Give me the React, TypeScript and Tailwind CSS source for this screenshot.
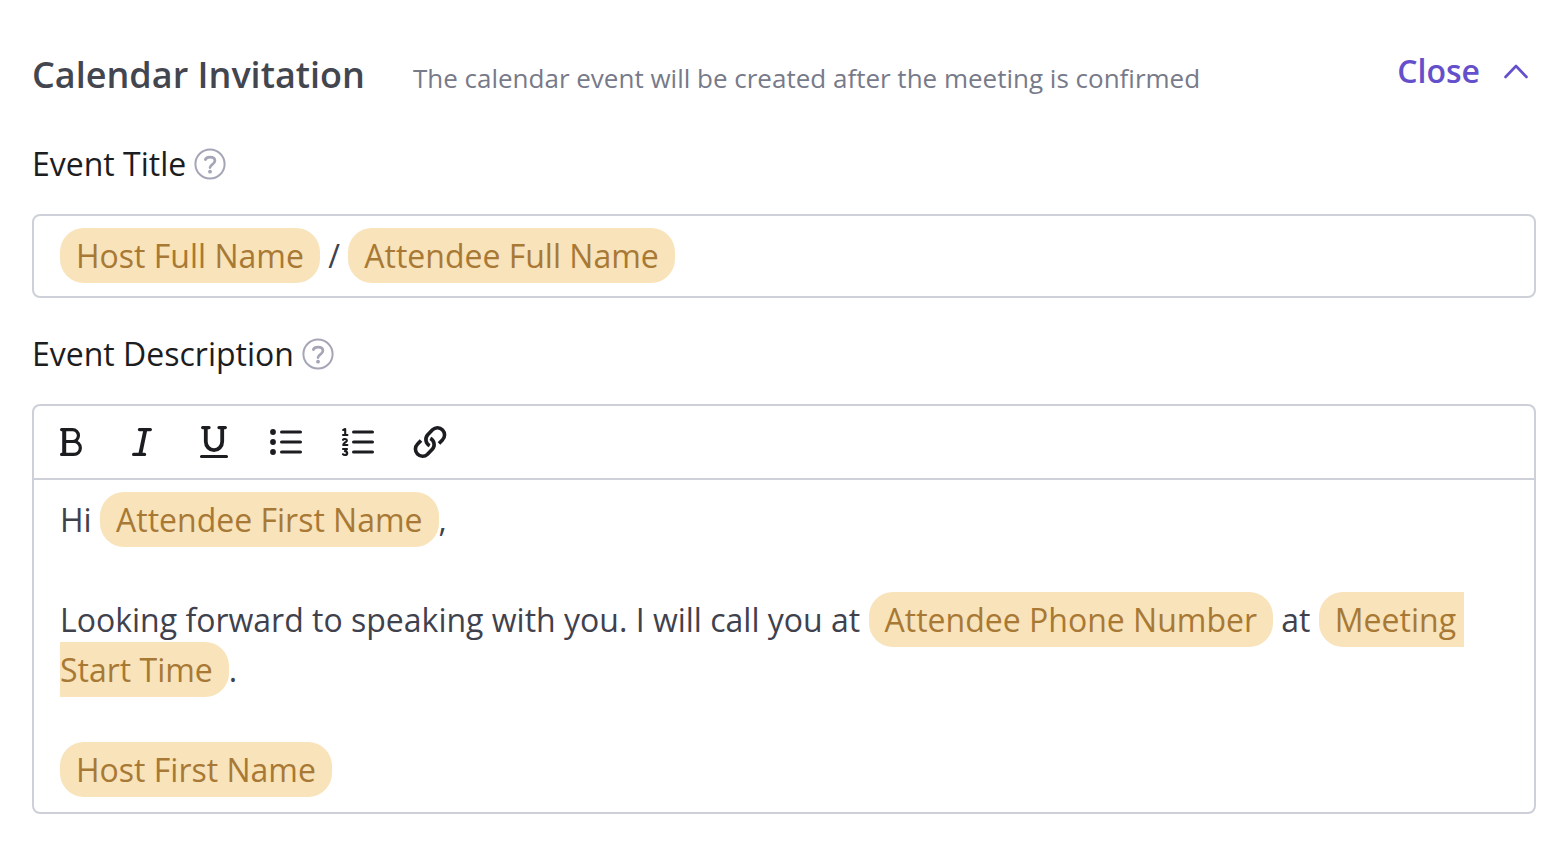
import type { ReactNode } from 'react'

const Tag = ({ children }: { children: ReactNode }) => (
  <span className="rounded-3xl bg-[#f8e3ba] px-4 py-1.5 text-[#a87935]">{children}</span>
)

const HelpButton = ({ label }: { label: string }) => (
  <button type="button" aria-label={label} className="text-[#a4a6b6]">
    <svg className="size-8" viewBox="0 0 32 32" fill="none" stroke="currentColor" strokeWidth="2">
      <circle cx="16" cy="16" r="14.6" />
      <path
        d="M11.3 11.6C12 10 13.7 9.2 16 9.2c2.9 0 4.9 1.400 4.9 3.6 0 3.600-4.900 3.300-4.900 6.800"
        strokeWidth="2.7"
        strokeLinecap="round"
      />
      <circle cx="16" cy="23.7" r="1.9" fill="currentColor" stroke="none" />
    </svg>
  </button>
)

const tools = [
  {
    name: 'Bold',
    icon: (
      <>
        <path
          d="M9.6 5.600H20.500a5.900 5.900 0 0 1 0 11.900H12.500M20.500 17.500h1.400a6.400 6.400 0 0 1 0 12.900H9.600"
          strokeWidth="3.2"
        />
        <path d="M12.200 6v24" strokeWidth="4" />
      </>
    ),
  },
  {
    name: 'Italic',
    icon: (
      <>
        <path d="M15.4 5.600h11M9.600 30.400h11" />
        <path d="M21.300 6l-5 24" strokeWidth="3.8" />
      </>
    ),
  },
  {
    name: 'Underline',
    icon: (
      <>
        <path d="M6.600 3.600h6.500M22.900 3.600h6.500M5.500 32.500h25" strokeWidth="3.1" />
        <path d="M9.800 4v13.500a8.200 8.600 0 0 0 16.400 0V4" strokeWidth="3.8" />
      </>
    ),
  },
  {
    name: 'Bulleted list',
    icon: (
      <>
        <path d="M13.500 8h19M13.500 18h19M13.500 28h19" strokeWidth="3" />
        <g fill="currentColor" stroke="none">
          <circle cx="5" cy="8" r="2.9" />
          <circle cx="5" cy="18" r="2.9" />
          <circle cx="5" cy="28" r="2.9" />
        </g>
      </>
    ),
  },
  {
    name: 'Numbered list',
    icon: (
      <>
        <path d="M13.500 8h19M13.500 18h19M13.500 28h19" strokeWidth="3" />
        <path
          d="M3.200 6L5.200 5v6M3 11h4.400M3 15.800c.6-1.200 3.900-1.200 3.900.6 0 1.700-3.600 2.500-3.700 4.600H7.400M3 25h4L4.900 27.300c3.200 0 3 3.700 0 3.700-.9 0-1.600-.3-2-.8"
          strokeWidth="2.1"
        />
      </>
    ),
  },
  {
    name: 'Link',
    icon: (
      <path
        d="M27 19.600l3.400-3.600A7 7 0 0 0 20.500 5.800L15.500 11a6.900 6.900 0 0 0 2.200 10.600M9 16.400L5.600 20a7 7 0 0 0 9.900 10.200L20.500 25a6.900 6.900 0 0 0-2.200-10.600"
        strokeWidth="3.6"
        strokeLinecap="butt"
      />
    ),
  },
]

const App = () => {
  return (
    <main className="bg-white pt-12 pr-7 pb-11 pl-8 font-['Open_Sans',sans-serif] text-[32px]">
      <header className="mb-[38px] flex items-start">
        <div className="flex items-baseline gap-12">
          <h1 className="text-4xl leading-[54px] font-semibold text-[#43464f]">Calendar Invitation</h1>
          <p className="text-[26px] text-[#777a89]">The calendar event will be created after the meeting is confirmed</p>
        </div>
        <button
          type="button"
          aria-expanded="true"
          className="ml-auto flex items-center gap-6 pr-2 leading-[46px] font-semibold text-[#6450ca]"
        >
          Close
          <svg
            className="h-4 w-6"
            viewBox="0 0 24 16"
            fill="none"
            stroke="currentColor"
            strokeWidth="2.6"
            strokeLinecap="round"
            strokeLinejoin="round"
          >
            <path d="M1.500 14L12 3l10.500 11" />
          </svg>
        </button>
      </header>

      <section className="mb-8">
        <div className="mb-[26px] flex items-center gap-2 leading-12 text-[#1c1d21]">
          <span id="event-title">Event Title</span>
          <HelpButton label="About the event title" />
        </div>
        <div
          role="textbox"
          aria-labelledby="event-title"
          contentEditable
          suppressContentEditableWarning
          className="rounded-lg border-2 border-[#cdd0d8] px-[26px] py-[15px] leading-[50px] whitespace-pre-wrap text-[#3f424d] outline-none"
        >
          <Tag>Host Full Name</Tag> / <Tag>Attendee Full Name</Tag>
        </div>
      </section>

      <section>
        <div className="mb-[26px] flex items-center gap-2 leading-12 text-[#1c1d21]">
          <span id="event-description">Event Description</span>
          <HelpButton label="About the event description" />
        </div>
        <div className="rounded-lg border-2 border-[#cdd0d8]">
          <div role="toolbar" aria-label="Formatting" className="flex border-b-2 border-[#cdd0d8]">
            {tools.map((tool) => (
              <button
                key={tool.name}
                type="button"
                aria-label={tool.name}
                className="flex size-18 items-center justify-center text-[#1c1d21]"
              >
                <svg
                  className="size-9"
                  viewBox="0 0 36 36"
                  fill="none"
                  stroke="currentColor"
                  strokeWidth="3.2"
                  strokeLinecap="round"
                  strokeLinejoin="round"
                >
                  {tool.icon}
                </svg>
              </button>
            ))}
          </div>
          <div
            role="textbox"
            aria-multiline="true"
            aria-labelledby="event-description"
            contentEditable
            suppressContentEditableWarning
            className="px-[26px] pt-[15px] pb-[17px] leading-[50px] whitespace-pre-wrap text-[#3f424d] outline-none"
          >
            <p>Hi <Tag>Attendee First Name</Tag>,</p>
            <p><br /></p>
            <p>
              Looking forward to speaking with you. I will call you at <Tag>Attendee Phone Number</Tag> at <Tag>Meeting Start Time</Tag>.
            </p>
            <p><br /></p>
            <p><Tag>Host First Name</Tag></p>
          </div>
        </div>
      </section>
    </main>
  )
}

export default App
